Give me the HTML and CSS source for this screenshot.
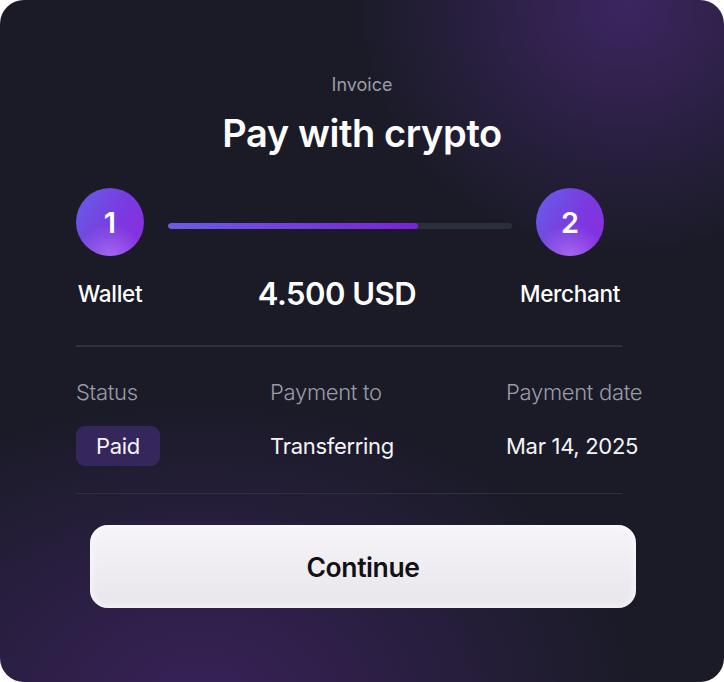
FILE: index.html
```html
<!DOCTYPE html>
<html>
<head>
<meta charset="utf-8">
<link rel="stylesheet" href="styles.css">
</head>
<body>
<div class="card">
  <div class="eyebrow">Invoice</div>
  <h1 class="title">Pay with crypto</h1>
  <div class="stepper">
    <div class="step">1</div>
    <div class="track"><div class="fill" style="width:72.7%"></div></div>
    <div class="step">2</div>
  </div>
  <div class="labels">
    <span class="lab lab-left">Wallet</span>
    <span class="amount">4.500 USD</span>
    <span class="lab lab-right">Merchant</span>
  </div>
  <div class="divider"></div>
  <div class="details">
    <div class="dlabel">Status</div>
    <div class="dlabel">Payment to</div>
    <div class="dlabel">Payment date</div>
    <div class="dval"><span class="badge">Paid</span></div>
    <div class="dval">Transferring</div>
    <div class="dval">Mar 14, 2025</div>
  </div>
  <div class="divider"></div>
  <button class="btn">Continue</button>
</div>
</body>
</html>
```
FILE: styles.css
```css
html, body {
  margin: 0;
  padding: 0;
  background: #ffffff;
}
body {
  width: 724px;
  height: 682px;
  font-family: Inter, "Noto Sans", sans-serif;
}
.card {
  box-sizing: border-box;
  width: 724px;
  height: 682px;
  border-radius: 24px;
  overflow: hidden;
  padding: 74px 102px 0 76px;
  color: #fff;
  background:
    radial-gradient(ellipse 270px 250px at 625px 5px, rgba(62, 38, 100, 0.95), rgba(62, 38, 100, 0) 100%),
    radial-gradient(ellipse 440px 300px at 200px 700px, rgba(58, 34, 92, 0.95), rgba(58, 34, 92, 0) 100%),
    #1a1b27;
  display: flex;
  flex-direction: column;
}
.eyebrow {
  text-align: center;
  font-size: 18px;
  line-height: 22px;
  color: #9b9ca9;
  width: 572px;
}
.title {
  margin: 17px 0 0 0;
  width: 572px;
  text-align: center;
  font-size: 38px;
  line-height: 40px;
  font-weight: 600;
  letter-spacing: -0.4px;
}
.stepper {
  margin-top: 35px;
  width: 528px;
  display: flex;
  align-items: center;
  gap: 24px;
}
.step {
  width: 68px;
  height: 68px;
  flex: none;
  border-radius: 50%;
  display: flex;
  align-items: center;
  justify-content: center;
  font-size: 29px;
  font-weight: 600;
  color: #fff;
  background:
    radial-gradient(circle at 50% 105%, rgba(200, 150, 255, 0.55), rgba(200, 150, 255, 0) 45%),
    linear-gradient(120deg, #6560e6 0%, #7a3ae0 55%, #8a2ce0 100%);
}
.track {
  flex: 1;
  height: 6px;
  margin-top: 8px;
  border-radius: 3px;
  background: #2b2e3b;
  overflow: hidden;
}
.fill {
  height: 100%;
  border-radius: 3px;
  background: linear-gradient(90deg, #6a5ce6, #7b21d8);
}
.labels {
  width: 528px;
  margin-top: 13px;
  display: grid;
  grid-template-columns: 68px 1fr 68px;
  align-items: center;
}
.lab {
  font-size: 22.5px;
  font-weight: 500;
  line-height: 50px;
  white-space: nowrap;
  justify-self: center;
  letter-spacing: -0.3px;
}
.amount {
  justify-self: center;
  font-size: 31px;
  font-weight: 600;
  line-height: 50px;
  letter-spacing: -0.5px;
  margin-left: -6px;
}
.divider {
  width: 546px;
  height: 1.5px;
  background: #2f303d;
  flex: none;
}
.labels + .divider {
  margin-top: 26px;
}
.details {
  width: 620px;
  display: grid;
  grid-template-columns: 194px 236px 1fr;
  row-gap: 22px;
  margin-top: 33px;
  margin-bottom: 27px;
  align-items: center;
}
.dlabel {
  font-size: 22px;
  line-height: 24px;
  font-weight: 300;
  color: #9a9ba8;
  white-space: nowrap;
  letter-spacing: -0.3px;
}
.dval {
  font-size: 22px;
  line-height: 40px;
  color: #f4f4f7;
  white-space: nowrap;
  letter-spacing: -0.3px;
}
.badge {
  display: inline-block;
  height: 40px;
  width: 84px;
  box-sizing: border-box;
  text-align: center;
  border-radius: 9px;
  background: #35275c;
  line-height: 40px;
}
.btn {
  margin-top: 31px;
  margin-left: 14px;
  width: 546px;
  height: 83px;
  flex: none;
  border: none;
  border-radius: 18px;
  background: linear-gradient(180deg, #f6f4f8 0%, #e8e6eb 100%);
  box-shadow: inset 0 0 10px rgba(255,255,255,0.8);
  font-family: Inter, "Noto Sans", sans-serif;
  font-size: 26.5px;
  font-weight: 600;
  color: #111116;
  letter-spacing: -0.4px;
}
```
